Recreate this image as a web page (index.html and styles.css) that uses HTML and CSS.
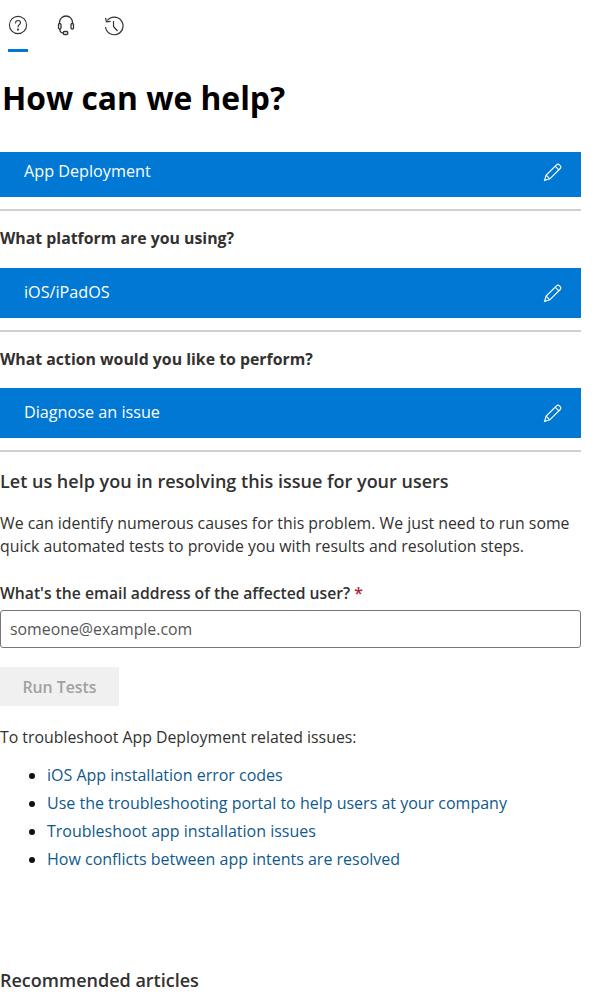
FILE: index.html
```html
<!DOCTYPE html>
<html lang="en">
<head>
<meta charset="utf-8">
<title>How can we help?</title>
<link rel="stylesheet" href="styles.css">
</head>
<body>
<nav class="tabs">
  <div class="tab active">
    <svg viewBox="0 0 20 20" width="20" height="20" fill="none" stroke="#333" stroke-width="1.1"><circle cx="10" cy="10" r="8.6"/><path d="M7.6 8c0-1.500 1.100-2.500 2.500-2.500s2.400 1 2.400 2.300c0 2-2.500 2-2.500 4.100" stroke-linecap="round"/><circle cx="10" cy="14.600" r=".5" fill="#333"/></svg>
  </div>
  <div class="tab">
    <svg viewBox="0 0 20 22" width="20" height="22" fill="none" stroke="#333" stroke-width="1.300"><path d="M3.500 9V7.500a6.500 6.500 0 0 1 13 0V9"/><rect x="2.500" y="8.500" width="2.500" height="5.500" rx="1.200"/><rect x="15" y="8.500" width="2.500" height="5.500" rx="1.200"/><path d="M3.800 14c0 2.500 1.500 4 3.500 4"/><rect x="7.300" y="16.500" width="4.500" height="3" rx="1.200"/></svg>
  </div>
  <div class="tab">
    <svg viewBox="0 0 22 22" width="22" height="22" fill="none" stroke="#333" stroke-width="1.200"><path d="M4.300 5.500A8.800 8.800 0 1 1 2.500 12"/><path d="M2.500 2.800 3.500 6.800 7.700 6.300"/><path d="M10.500 6v5.500l4 4.500"/></svg>
  </div>
</nav>
<h1 class="title">How can we help?</h1>

<div class="choice first"><span>App Deployment</span><svg class="pencil" viewBox="0 0 18 18" width="19" height="19" fill="none" stroke="#fff" stroke-width="1.100"><path d="M1.500 16.500 3 11.500 12.800 1.700a1.900 1.900 0 0 1 2.700 0l.8.800a1.900 1.900 0 0 1 0 2.700L6.500 15z"/><path d="M3 11.500 6.500 15M11.500 3l3.500 3.500"/></svg></div>
<hr class="rule">
<h2 class="question">What platform are you using?</h2>
<div class="choice"><span>iOS/iPadOS</span><svg class="pencil" viewBox="0 0 18 18" width="19" height="19" fill="none" stroke="#fff" stroke-width="1.100"><path d="M1.500 16.500 3 11.500 12.800 1.700a1.900 1.900 0 0 1 2.700 0l.8.800a1.900 1.900 0 0 1 0 2.700L6.500 15z"/><path d="M3 11.500 6.500 15M11.500 3l3.500 3.500"/></svg></div>
<hr class="rule">
<h2 class="question">What action would you like to perform?</h2>
<div class="choice"><span>Diagnose an issue</span><svg class="pencil" viewBox="0 0 18 18" width="19" height="19" fill="none" stroke="#fff" stroke-width="1.100"><path d="M1.500 16.500 3 11.500 12.800 1.700a1.900 1.900 0 0 1 2.700 0l.8.800a1.900 1.900 0 0 1 0 2.700L6.500 15z"/><path d="M3 11.500 6.500 15M11.500 3l3.500 3.500"/></svg></div>
<hr class="rule">

<h3 class="section">Let us help you in resolving this issue for your users</h3>
<p class="intro">We can identify numerous causes for this problem. We just need to run some quick automated tests to provide you with results and resolution steps.</p>
<label class="label" for="email">What's the email address of the affected user? <span class="req">*</span></label>
<input class="email" id="email" type="text" placeholder="someone@example.com">
<button class="run" disabled>Run Tests</button>
<p class="related">To troubleshoot App Deployment related issues:</p>
<ul class="links">
  <li><a href="#">iOS App installation error codes</a></li>
  <li><a href="#">Use the troubleshooting portal to help users at your company</a></li>
  <li><a href="#">Troubleshoot app installation issues</a></li>
  <li><a href="#">How conflicts between app intents are resolved</a></li>
</ul>
<h3 class="recommended">Recommended articles</h3>
</body>
</html>
```
FILE: styles.css
```css
* { box-sizing: border-box; }
html, body { margin: 0; padding: 0; }
body {
  width: 581px;
  height: 999px;
  overflow: hidden;
  font-family: "Open Sans", "Noto Sans", sans-serif;
  font-size: 15.85px;
  color: #323130;
  background: #fff;
}
.tabs { display: flex; height: 52px; padding-left: 8px; }
.tab {
  width: 20px;
  margin-right: 28px;
  padding-top: 15px;
  height: 52px;
  display: flex;
  justify-content: center;
  align-items: flex-start;
}
.tab svg { flex: none; }
.tab.active { border-bottom: 3px solid #0078d4; }
.title {
  margin: 25px 0 0 2px;
  font-size: 31.8px;
  line-height: 42px;
  font-weight: 700;
  color: #000;
}
.choice {
  display: flex;
  justify-content: space-between;
  background: #0078d4;
  color: #fff;
  height: 50px;
  padding: 13px 19px 0 24px;
  font-size: 16.2px;
  line-height: 22px;
}
.choice.first { height: 45px; margin-top: 33px; padding-top: 8px; }
.pencil { margin-top: 3px; }
.rule { border: 0; border-top: 2px solid #d2d0ce; margin: 12px 0 0; }
.question {
  margin: 16px 0 18px;
  font-size: 15.85px;
  line-height: 22px;
  font-weight: 700;
}
.choice.first + .rule + .question { margin-bottom: 19px; }
.section {
  margin: 17px 0 0;
  font-size: 18px;
  line-height: 24px;
  font-weight: 600;
}
.intro { margin: 19px 0 0; line-height: 23px; }
.label { display: block; margin-top: 24px; line-height: 22px; font-size: 15.7px; font-weight: 600; }
.req { color: #a4262c; }
.email {
  display: block;
  width: 100%;
  height: 38px;
  margin-top: 6px;
  padding: 0 9px;
  border: 1px solid #777;
  border-radius: 3px;
  font: inherit;
}
.email::placeholder { color: #555; opacity: 1; }
.run {
  display: block;
  width: 119px;
  height: 39px;
  margin-top: 19px;
  border: 0;
  background: #f0f0f0;
  color: #a1a1a1;
  font: inherit;
  font-weight: 600;
}
.related { margin: 20px 0 0; line-height: 22px; }
.links { margin: 13px 0 0; padding: 0 0 0 47px; font-size: 16px; }
.links li { line-height: 28px; color: #111; }
.links a { color: #10598c; text-decoration: none; }
.recommended { margin: 95px 0 0; font-size: 18px; line-height: 24px; font-weight: 600; }
```
